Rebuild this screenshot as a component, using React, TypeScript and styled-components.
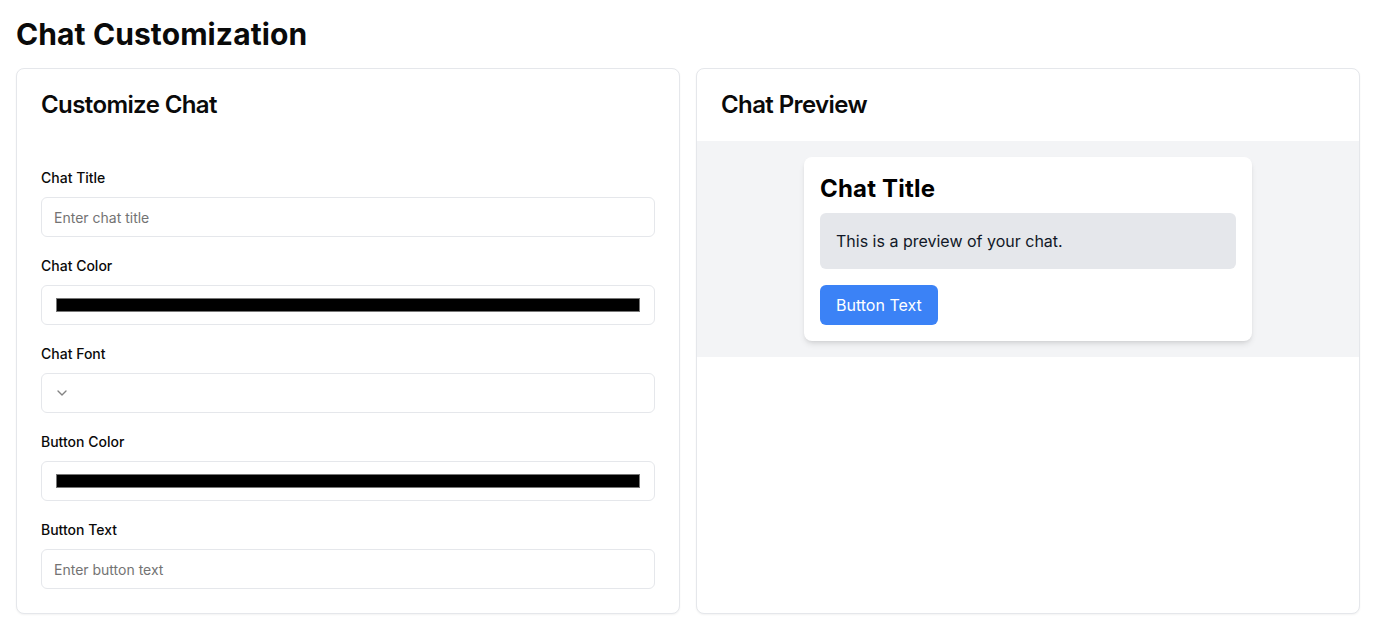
import React from "react";
import styled, { createGlobalStyle } from "styled-components";

const GlobalStyle = createGlobalStyle`
  * { box-sizing: border-box; }
  body {
    margin: 0;
    background: #ffffff;
    font-family: Inter, "Noto Sans", sans-serif;
    color: #0a0a0a;
  }
`;

const Page = styled.div`
  padding: 16px;
`;

const PageTitle = styled.h1`
  margin: 0 0 16px;
  font-size: 30px;
  line-height: 36px;
  font-weight: 700;
  letter-spacing: 0.1px;
  color: #0a0a0a;
`;

const Grid = styled.div`
  display: grid;
  grid-template-columns: 1fr 1fr;
  gap: 16px;
`;

const Card = styled.section`
  border: 1px solid #e5e7eb;
  border-radius: 8px;
  background: #fff;
  box-shadow: 0 1px 2px rgba(0, 0, 0, 0.05);
  display: flex;
  flex-direction: column;
`;

const CardHeader = styled.div`
  padding: 24px;
`;

const CardTitle = styled.h2`
  margin: 0;
  font-size: 24px;
  line-height: 24px;
  font-weight: 600;
  letter-spacing: -0.6px;
  color: #0a0a0a;
`;

const Form = styled.div`
  padding: 30px 24px 24px;
  display: flex;
  flex-direction: column;
  gap: 22px;
`;

const Field = styled.div`
  display: flex;
  flex-direction: column;
  gap: 12px;
`;

const Label = styled.label`
  font-size: 14px;
  line-height: 14px;
  font-weight: 500;
  color: #0a0a0a;
`;

const TextInput = styled.input`
  height: 40px;
  width: 100%;
  border: 1px solid #e5e7eb;
  border-radius: 6px;
  padding: 8px 12px;
  font-family: inherit;
  font-size: 14px;
  color: #0a0a0a;
  background: #fff;
  outline: none;
  &::placeholder { color: #737373; }
`;

const ColorInput = styled.input`
  height: 40px;
  width: 100%;
  border: 1px solid #e5e7eb;
  border-radius: 6px;
  padding: 8px 12px;
  background: #fff;
  cursor: pointer;
  outline: none;
`;

const SelectTrigger = styled.button`
  height: 40px;
  width: 100%;
  border: 1px solid #e5e7eb;
  border-radius: 6px;
  padding: 8px 12px;
  background: #fff;
  display: flex;
  align-items: center;
  gap: 8px;
  color: #0a0a0a;
  cursor: pointer;
  svg { opacity: 0.5; }
`;

const PreviewArea = styled.div`
  background: #f3f4f6;
  padding: 16px;
`;

const ChatCard = styled.div`
  max-width: 448px;
  margin: 0 auto;
  background: #fff;
  border-radius: 8px;
  padding: 16px;
  box-shadow: 0 4px 6px -1px rgba(0, 0, 0, 0.1), 0 2px 4px -2px rgba(0, 0, 0, 0.1);
`;

const ChatTitle = styled.h3`
  margin: 0 0 8px;
  font-size: 24px;
  line-height: 32px;
  font-weight: 700;
  letter-spacing: 0.2px;
  color: #000;
`;

const Message = styled.div`
  background: #e5e7eb;
  border-radius: 6px;
  padding: 16px;
  font-size: 16px;
  line-height: 24px;
  color: #111827;
  margin-bottom: 16px;
`;

const PreviewButton = styled.button<{ $bg: string }>`
  background: ${(p) => p.$bg};
  color: #fff;
  border: none;
  border-radius: 6px;
  padding: 8px 16px;
  font-family: inherit;
  font-size: 16px;
  line-height: 24px;
  cursor: pointer;
`;

const Chevron = () => (
  <svg width="16" height="16" viewBox="0 0 24 24" fill="none" stroke="currentColor" strokeWidth="2" strokeLinecap="round" strokeLinejoin="round">
    <path d="m6 9 6 6 6-6" />
  </svg>
);

export default function App() {
  return (
    <>
      <GlobalStyle />
      <Page>
        <PageTitle>Chat Customization</PageTitle>
        <Grid>
          <Card>
            <CardHeader>
              <CardTitle>Customize Chat</CardTitle>
            </CardHeader>
            <Form>
              <Field>
                <Label htmlFor="title">Chat Title</Label>
                <TextInput id="title" placeholder="Enter chat title" />
              </Field>
              <Field>
                <Label htmlFor="color">Chat Color</Label>
                <ColorInput id="color" type="color" defaultValue="#000000" />
              </Field>
              <Field>
                <Label>Chat Font</Label>
                <SelectTrigger type="button">
                  <Chevron />
                </SelectTrigger>
              </Field>
              <Field>
                <Label htmlFor="bcolor">Button Color</Label>
                <ColorInput id="bcolor" type="color" defaultValue="#000000" />
              </Field>
              <Field>
                <Label htmlFor="btext">Button Text</Label>
                <TextInput id="btext" placeholder="Enter button text" />
              </Field>
            </Form>
          </Card>
          <Card>
            <CardHeader>
              <CardTitle>Chat Preview</CardTitle>
            </CardHeader>
            <PreviewArea>
              <ChatCard>
                <ChatTitle>Chat Title</ChatTitle>
                <Message>This is a preview of your chat.</Message>
                <PreviewButton $bg="#3b82f6">Button Text</PreviewButton>
              </ChatCard>
            </PreviewArea>
          </Card>
        </Grid>
      </Page>
    </>
  );
}
